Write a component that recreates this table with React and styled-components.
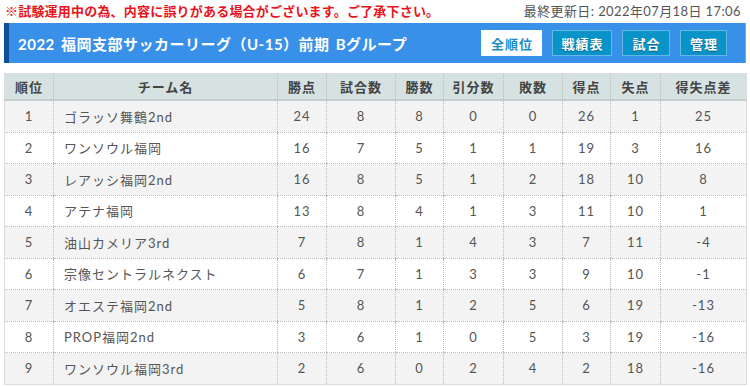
import React from "react";
import styled, { createGlobalStyle } from "styled-components";

const Global = createGlobalStyle`
  html, body { margin: 0; padding: 0; background: #fff; }
  body { font-family: Lato, "Noto Sans CJK JP", sans-serif; color: #555; }
`;

const Page = styled.div`
  width: 750px;
  padding: 0 4px;
  box-sizing: border-box;
`;

const TopLine = styled.div`
  display: flex;
  justify-content: space-between;
  align-items: center;
  height: 23px;
  padding: 0 5px 0 1px;
  font-size: 13px;
  line-height: 1;
`;

const Notice = styled.span`
  color: #e8141b;
  font-weight: 700;
  letter-spacing: 0.2px;
`;

const Updated = styled.span`
  color: #555;
  letter-spacing: 0.4px;
`;

const Bar = styled.div`
  display: flex;
  align-items: center;
  justify-content: space-between;
  height: 40px;
  background: #3890e9;
  border-left: 5px solid #0f4f96;
  border-right: 1px solid #6aaef0;
  padding: 0 18px 0 9px;
  box-sizing: border-box;
`;

const Title = styled.h1`
  margin: 0;
  color: #fff;
  font-size: 15px;
  font-weight: 700;
  letter-spacing: 0.5px;
  word-spacing: 2px;
`;

const Buttons = styled.div`
  display: flex;
  gap: 10px;
`;

const Btn = styled.div`
  height: 26px;
  width: ${(p) => p.$w}px;
  box-sizing: border-box;
  display: flex;
  align-items: center;
  justify-content: center;
  padding-left: 1px;
  font-size: 13px;
  font-weight: 700;
  letter-spacing: 1px;
  background: ${(p) => (p.$active ? "#fff" : "#0a93c8")};
  color: ${(p) => (p.$active ? "#1a8ccc" : "#fff")};
  border: 1px solid ${(p) => (p.$active ? "#fff" : "#62b9e4")};
  text-shadow: ${(p) => (p.$active ? "none" : "0 1px 1px rgba(0,0,0,0.35)")};
`;

const Table = styled.table`
  margin-top: 10px;
  width: 742px;
  border-collapse: collapse;
  table-layout: fixed;
  border: 1px solid #dcdcdc;
  font-size: 13px;
`;

const Th = styled.th`
  height: 25px;
  padding: 0;
  background: #d6e2e2;
  color: #444;
  font-weight: 700;
  letter-spacing: 1px;
  border-bottom: 2px solid #c7cccc;
  border-left: 1px dotted #bbb;
  &:first-child { border-left: none; }
`;

const Tr = styled.tr`
  background: ${(p) => (p.$odd ? "#f3f3f3" : "#fff")};
`;

const Td = styled.td`
  height: 30.5px;
  padding: 0;
  padding-left: ${(p) => (p.$left ? "10px" : "0")};
  text-align: ${(p) => (p.$left ? "left" : "center")};
  color: #555;
  letter-spacing: 1px;
  border-bottom: 1px dotted #bbb;
  border-left: 1px dotted #bbb;
  &:first-child { border-left: none; }
`;

const widths = [49, 224, 49, 69, 48, 60, 59, 48, 50, 86];
const heads = ["順位", "チーム名", "勝点", "試合数", "勝数", "引分数", "敗数", "得点", "失点", "得失点差"];

const rows = [
  [1, "ゴラッソ舞鶴2nd", 24, 8, 8, 0, 0, 26, 1, 25],
  [2, "ワンソウル福岡", 16, 7, 5, 1, 1, 19, 3, 16],
  [3, "レアッシ福岡2nd", 16, 8, 5, 1, 2, 18, 10, 8],
  [4, "アテナ福岡", 13, 8, 4, 1, 3, 11, 10, 1],
  [5, "油山カメリア3rd", 7, 8, 1, 4, 3, 7, 11, -4],
  [6, "宗像セントラルネクスト", 6, 7, 1, 3, 3, 9, 10, -1],
  [7, "オエステ福岡2nd", 5, 8, 1, 2, 5, 6, 19, -13],
  [8, "PROP福岡2nd", 3, 6, 1, 0, 5, 3, 19, -16],
  [9, "ワンソウル福岡3rd", 2, 6, 0, 2, 4, 2, 18, -16],
];

export default function App() {
  return (
    <Page>
      <Global />
      <TopLine>
        <Notice>※試験運用中の為、内容に誤りがある場合がございます。ご了承下さい。</Notice>
        <Updated>最終更新日: 2022年07月18日 17:06</Updated>
      </TopLine>
      <Bar>
        <Title>2022 福岡支部サッカーリーグ（U-15）前期 Bグループ</Title>
        <Buttons>
          <Btn $active $w={61}>全順位</Btn>
          <Btn $w={60}>戦績表</Btn>
          <Btn $w={48}>試合</Btn>
          <Btn $w={47}>管理</Btn>
        </Buttons>
      </Bar>
      <Table>
        <colgroup>
          {widths.map((w, i) => (
            <col key={i} style={{ width: w }} />
          ))}
        </colgroup>
        <thead>
          <tr>
            {heads.map((h) => (
              <Th key={h}>{h}</Th>
            ))}
          </tr>
        </thead>
        <tbody>
          {rows.map((r, i) => (
            <Tr key={i} $odd={i % 2 === 0}>
              {r.map((c, j) => (
                <Td key={j} $left={j === 1}>
                  {c}
                </Td>
              ))}
            </Tr>
          ))}
        </tbody>
      </Table>
    </Page>
  );
}
